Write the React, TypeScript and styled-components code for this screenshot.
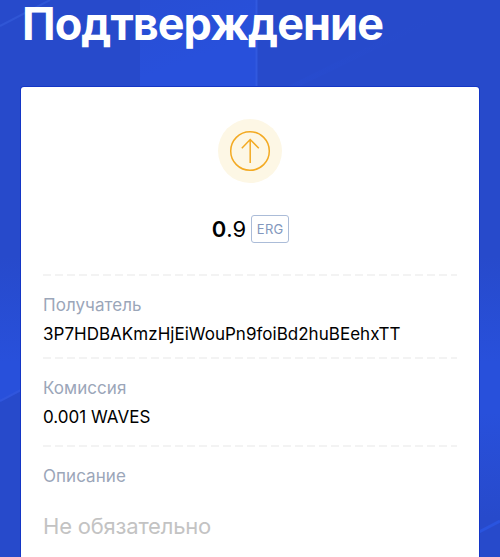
import React from "react";
import styled, { createGlobalStyle } from "styled-components";

const GlobalStyle = createGlobalStyle`
  *, *::before, *::after { box-sizing: border-box; }
  body { margin: 0; overflow: hidden; }
`;

const Screen = styled.main`
  position: relative;
  isolation: isolate;
  width: 500px;
  height: 557px;
  overflow: hidden;
  display: flex;
  flex-direction: column;
  padding: 0 21px;
  background: #274acb;
  font-family: Inter, "Liberation Sans", sans-serif;
`;

const Backdrop = styled.svg`
  position: absolute;
  inset: 0;
  z-index: -1;
`;

const Title = styled.h1`
  flex: none;
  height: 87px;
  margin: 0;
  padding-left: 1px;
  font-size: 45px;
  line-height: 47px;
  font-weight: 700;
  letter-spacing: -0.95px;
  color: #fff;
  white-space: nowrap;
`;

const Card = styled.section`
  flex: 1;
  display: flex;
  flex-direction: column;
  padding: 32px 22px 0;
  background: #fff;
  border-radius: 3px 3px 0 0;
  box-shadow: 0 0 0 1px #1436c6;
`;

const Summary = styled.div`
  flex: none;
  height: 155px;
  display: flex;
  flex-direction: column;
  align-items: center;
`;

const Amount = styled.div`
  display: flex;
  align-items: center;
  gap: 5px;
  margin-top: 32px;
  padding-left: 1px;
  font-size: 22px;
  line-height: 28px;
  color: #000;
`;

const Whole = styled.span`
  font-weight: 600;
`;

const Ticker = styled.span`
  width: 38px;
  height: 28px;
  border: 1px solid #abbcd8;
  border-radius: 3px;
  font-size: 13px;
  line-height: 27px;
  letter-spacing: 0.3px;
  text-align: center;
  color: #8297bd;
`;

const Field = styled.div<{ $height: number }>`
  flex: none;
  height: ${(p) => p.$height}px;
  padding-top: 20px;
  background: repeating-linear-gradient(90deg, #f3f3f3 0 8px, transparent 8px 12px) 0 0 / 100% 2px no-repeat;
`;

const Label = styled.div`
  font-size: 17px;
  line-height: 22px;
  letter-spacing: 0.05px;
  color: #9ba6b9;
`;

const Value = styled.div`
  margin-top: 7px;
  font-size: 17px;
  line-height: 22px;
  letter-spacing: 0.02px;
  color: #000;
  white-space: nowrap;
`;

const Placeholder = styled.div`
  margin-top: 24px;
  font-size: 22px;
  line-height: 30px;
  letter-spacing: -0.2px;
  color: #c3c3c3;
`;

function SendIcon() {
  return (
    <svg width="64" height="64" viewBox="0 0 64 64" fill="none" stroke="#f3aa23" strokeWidth="1.5">
      <circle cx="32" cy="32" r="32" fill="#fdf7e5" stroke="none" />
      <circle cx="32" cy="32" r="19.3" />
      <path d="M32.2 44V20.5M23.8 29.3L32.2 20.5L40.8 29.3" />
    </svg>
  );
}

function Background() {
  return (
    <Backdrop width="500" height="557" viewBox="0 0 500 557">
      <defs>
        <linearGradient id="sides" x1="0" y1="0" x2="0" y2="1">
          <stop offset="0.46" stopColor="#274acb" />
          <stop offset="0.65" stopColor="#2850db" />
          <stop offset="0.74" stopColor="#2850db" />
          <stop offset="0.93" stopColor="#274acb" />
        </linearGradient>
        <linearGradient id="stripe" x1="0" y1="0" x2="0.5" y2="1">
          <stop offset="0" stopColor="#284ed4" />
          <stop offset="0.7" stopColor="#2850db" />
        </linearGradient>
        <linearGradient id="sheen" x1="0" y1="1" x2="0" y2="0">
          <stop offset="0" stopColor="#2850db" stopOpacity="0.7" />
          <stop offset="1" stopColor="#274acb" stopOpacity="0" />
        </linearGradient>
      </defs>
      <rect width="500" height="557" fill="url(#sides)" />
      <path d="M0 401L21 390V557H0Z" fill="#274acb" />
      <path d="M0 401L21 390" stroke="#3056dd" strokeWidth="2" />
      <rect x="140" width="117" height="90" fill="url(#stripe)" />
      <path d="M256.5 0V90" stroke="#3159df" strokeWidth="2" />
      <path d="M0 26L50 0" stroke="#3056d5" strokeWidth="2" />
      <path d="M300 86L478 0H462L288 86Z" fill="url(#sheen)" opacity="0.3" />
      <path d="M479 532L500 521" stroke="#2a54df" strokeWidth="3" />
    </Backdrop>
  );
}

export default function App() {
  return (
    <>
      <GlobalStyle />
      <Screen>
        <Background />
        <Title>Подтверждение</Title>
        <Card>
          <Summary>
            <SendIcon />
            <Amount>
              <span><Whole>0</Whole>.9</span>
              <Ticker>ERG</Ticker>
            </Amount>
          </Summary>
          <Field $height={83}>
            <Label>Получатель</Label>
            <Value>3P7HDBAKmzHjEiWouPn9foiBd2huBEehxTT</Value>
          </Field>
          <Field $height={88}>
            <Label>Комиссия</Label>
            <Value>0.001 WAVES</Value>
          </Field>
          <Field $height={112}>
            <Label>Описание</Label>
            <Placeholder>Не обязательно</Placeholder>
          </Field>
        </Card>
      </Screen>
    </>
  );
}
